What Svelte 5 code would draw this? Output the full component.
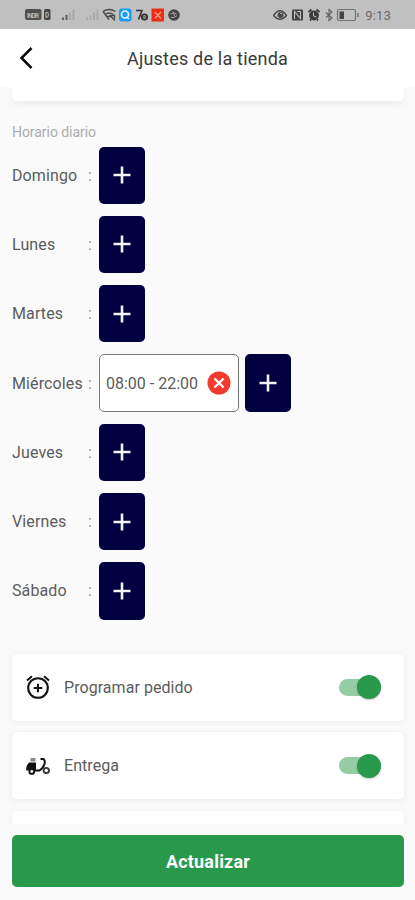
<script lang="ts">
  type Day = { name: string; slots: string[] };

  let days: Day[] = $state([
    { name: 'Domingo', slots: [] },
    { name: 'Lunes', slots: [] },
    { name: 'Martes', slots: [] },
    { name: 'Miércoles', slots: ['08:00 - 22:00'] },
    { name: 'Jueves', slots: [] },
    { name: 'Viernes', slots: [] },
    { name: 'Sábado', slots: [] }
  ]);

  let options = $state([
    { label: 'Programar pedido', icon: 'alarm', enabled: true },
    { label: 'Entrega', icon: 'scooter', enabled: true }
  ]);

  function addSlot(day: Day) {
    day.slots.push('08:00 - 22:00');
  }

  function removeSlot(day: Day, index: number) {
    day.slots.splice(index, 1);
  }
</script>

<div class="screen">
  <div class="status-bar">
    <svg width="158" height="16" viewBox="0 0 158 16">
      <rect x="0" y="2" width="16.5" height="11" rx="2" fill="#505050" />
      <text x="2" y="10.5" font-size="7" font-weight="700" fill="#b8b8b8" textLength="12">INDR</text>
      <rect x="19" y="2" width="6.5" height="11" rx="1.5" fill="#484848" />
      <path d="M21 5v5.5M21 5q2.5 0 2.5 2.7t-2.5 2.8" fill="none" stroke="#bbb" />
      <path d="M38 10.5V13M41.500 8v5" stroke="#606060" stroke-width="2" />
      <path d="M45 5.5V13M48.5 2.5V13" stroke="#a8a8a8" stroke-width="2" />
      <path d="M62 10.5V13M65.5 8v5M69 5.5V13M72.5 2.5V13" stroke="#a9a9a9" stroke-width="2" />
      <g fill="none" stroke="#494949" stroke-width="1.4">
        <path d="M78 4.5q6-4 12.5 0M80 7.5q4-3 8.5 0M82 10q2-1.5 4 0" />
        <path d="M84.5 8.5h5v3M90 13.5l-5-5M78 4.5l6 8" />
      </g>
      <rect x="94" y="1.5" width="12.5" height="13" rx="3" fill="#189cf5" />
      <circle cx="100" cy="7.5" r="3.5" fill="none" stroke="#e5f5ff" stroke-width="1.7" />
      <path d="M101.5 10l2.5 2" stroke="#e5f5ff" stroke-width="1.6" />
      <path d="M111 3.5h6l-3.5 9" fill="none" stroke="#333" stroke-width="1.6" />
      <circle cx="119.5" cy="10" r="2.7" fill="none" stroke="#333" stroke-width="1.8" />
      <path d="M117.5 10h4" stroke="#333" />
      <rect x="126.5" y="1.5" width="12.5" height="13" fill="#ee2c16" />
      <path d="M129.5 5l3.3 3 3.3-3M129.5 11.5l3.3-3 3.3 3" fill="none" stroke="#ff9b83" stroke-width="1.3" />
      <circle cx="149" cy="8" r="5.8" fill="#454545" />
      <path d="M145.500 7q3-2.500 6 0M146 10.500h3l3-2M148 4.500l1.500 4.500" fill="none" stroke="#a5a5a5" />
    </svg>
    <div class="status-right">
      <svg width="87" height="16" viewBox="0 0 87 16">
        <path d="M.5 8.5Q7-1 13.5 8.5 7 16 .5 8.5z" fill="none" stroke="#484848" stroke-width="1.4" />
        <circle cx="7.5" cy="8" r="3" fill="#484848" />
        <path d="M7 6l2 1" stroke="#bbb" />
        <rect x="19" y="2.5" width="11" height="11" rx="1" fill="#424242" />
        <path d="M21.5 12V4.5l6 7V4M24 4.5h3" fill="none" stroke="#bebebe" stroke-width="1.1" />
        <circle cx="41" cy="8.5" r="4.9" fill="#3c3c3c" />
        <path d="M35.5 5l3-2.5M46.5 5l-3-2.5M37 13.5l1-1M45 13.5l-1-1" stroke="#3c3c3c" stroke-width="1.8" />
        <path d="M40.5 5.5v3.5l3 1" fill="none" stroke="#bcbcbc" />
        <path d="M53 5.5l6 5.5-3 2.5v-11l3 2.5-6 5.5" fill="none" stroke="#606060" stroke-width="1.1" />
        <rect x="64.5" y="2.5" width="18" height="11" rx="1.5" fill="none" stroke="#747474" stroke-width="1.2" />
        <rect x="66.5" y="4.5" width="4.5" height="7.5" fill="#444" />
        <path d="M85 6v4" stroke="#747474" stroke-width="1.5" />
      </svg>
      <span class="clock">9:13</span>
    </div>
  </div>

  <header class="header">
    <button class="back" aria-label="Atrás">
      <svg width="14" height="24" viewBox="0 0 14 24">
        <path d="M12.5 2L2.5 12l10 10" fill="none" stroke="#0a0a0a" stroke-width="2.5" />
      </svg>
    </button>
    <h1>Ajustes de la tienda</h1>
  </header>

  <main class="content">
    <div class="card card-top"></div>

    <h2>Horario diario</h2>
    <div class="days">
      {#each days as day}
        <div class="day">
          <span class="day-name">{day.name}</span>
          <span class="colon">:</span>
          <div class="slots">
            {#each day.slots as slot, i}
              <div class="slot">
                <span>{slot}</span>
                <button class="remove" aria-label="Eliminar" onclick={() => removeSlot(day, i)}>
                  <svg width="24" height="24" viewBox="0 0 24 24">
                    <circle cx="12" cy="12" r="11.5" fill="#f23a2e" />
                    <path d="M7.5 7.5l9 9M16.5 7.5l-9 9" stroke="#fff" stroke-width="2.4" />
                  </svg>
                </button>
              </div>
            {/each}
            <button class="add" aria-label="Agregar" onclick={() => addSlot(day)}>
              <svg width="18" height="18" viewBox="0 0 18 18">
                <path d="M9 .5v17M.5 9h17" stroke="#f2f2f4" stroke-width="2.6" />
              </svg>
            </button>
          </div>
        </div>
      {/each}
    </div>

    <div class="options">
      {#each options as option}
        <div class="card option">
          {#if option.icon === 'alarm'}
            <svg width="26" height="26" viewBox="0 0 26 26" fill="none" stroke="#151515">
              <circle cx="13" cy="14" r="9.8" stroke-width="2.1" />
              <path d="M13 9.7v8.6M8.7 14h8.6" stroke-width="2" />
              <path d="M2 6.5l5-4.2M24 6.5l-5-4.2" stroke-width="2.1" />
            </svg>
          {:else}
            <svg width="26" height="26" viewBox="0 0 26 26">
              <rect x="5.5" y="5" width="5" height="3.5" fill="#8a8a8a" />
              <path d="M4 9.5h7v8H1.2q-.4-5 2.8-8z" fill="#111" />
              <path d="M10 17.5h4.5q3.500-2 5-6.500 1-3-1-5H15.500" fill="none" stroke="#111" stroke-width="2" />
              <circle cx="6.8" cy="18.5" r="2.4" fill="#fff" stroke="#111" stroke-width="1.9" />
              <circle cx="21.3" cy="17.5" r="2.7" fill="#fff" stroke="#333" stroke-width="1.8" />
            </svg>
          {/if}
          <span class="option-label">{option.label}</span>
          <button
            class="switch"
            class:on={option.enabled}
            role="switch"
            aria-checked={option.enabled}
            aria-label={option.label}
            onclick={() => (option.enabled = !option.enabled)}
          >
            <span class="thumb"></span>
          </button>
        </div>
      {/each}
      <div class="card option"></div>
    </div>
  </main>

  <footer class="footer">
    <button class="submit">Actualizar</button>
  </footer>
</div>

<style>
  :global(body) {
    background: #fafafa;
  }

  .screen {
    display: flex;
    flex-direction: column;
    height: 900px;
    overflow: hidden;
    background: #fafafa;
    font-family: Roboto, 'Liberation Sans', sans-serif;
    color: #5c5c5c;
  }

  button {
    padding: 0;
    border: none;
    background: none;
    font-family: inherit;
  }

  svg {
    display: block;
    flex: none;
  }

  .status-bar {
    display: flex;
    align-items: center;
    justify-content: space-between;
    flex: none;
    box-sizing: border-box;
    height: 29px;
    padding: 1px 24px 0 25px;
    background: #c0c0c0;
  }

  .status-right {
    display: flex;
    align-items: center;
    gap: 5px;
  }

  .clock {
    font-size: 13px;
    letter-spacing: 0.2px;
    color: #6a6a6a;
  }

  .header {
    display: grid;
    grid-template-columns: 40px 1fr 40px;
    align-items: center;
    flex: none;
    height: 58px;
    background: #fff;
  }

  .back {
    padding-left: 19px;
  }

  h1 {
    margin: 0;
    text-align: center;
    font-size: 18px;
    font-weight: 400;
    letter-spacing: 0.2px;
    color: #3a3a3a;
  }

  .content {
    flex: 1;
    min-height: 0;
    padding: 0 11px 0 12px;
    overflow: hidden;
  }

  .card {
    border-radius: 5px;
    background: #fff;
    box-shadow: 0 1px 7px rgba(0, 0, 0, 0.06);
  }

  .card-top {
    height: 13.5px;
    border-radius: 0 0 5px 5px;
    box-shadow: 0 3px 7px rgba(0, 0, 0, 0.06);
  }

  h2 {
    margin: 22px 0 5px;
    font-size: 14px;
    font-weight: 400;
    line-height: 19px;
    letter-spacing: -0.05px;
    color: #acacac;
  }

  .days {
    display: grid;
    gap: 12px;
  }

  .day {
    display: flex;
    align-items: center;
    height: 57.3px;
    font-size: 16px;
  }

  .day-name {
    width: 76px;
    letter-spacing: 0.12px;
  }

  .colon {
    width: 11px;
    color: #999;
  }

  .slots {
    display: flex;
    gap: 6px;
    height: 100%;
  }

  .slot {
    display: flex;
    align-items: center;
    justify-content: space-between;
    box-sizing: border-box;
    width: 140px;
    padding: 0 7.5px 0 6px;
    border: 1px solid #777;
    border-radius: 5px;
    background: #fff;
  }

  .add {
    display: grid;
    place-items: center;
    width: 46px;
    border-radius: 5px;
    background: #010041;
  }

  .options {
    display: grid;
    gap: 11.5px;
    margin-top: 34.4px;
  }

  .option {
    display: flex;
    align-items: center;
    box-sizing: border-box;
    height: 67px;
    padding: 0 23px 0 13px;
    font-size: 16px;
  }

  .option-label {
    flex: 1;
    margin-left: 13px;
    letter-spacing: 0.05px;
  }

  .switch {
    display: flex;
    align-items: center;
    width: 42px;
    height: 17px;
    border-radius: 9px;
    background: #bbb;
  }

  .switch.on {
    justify-content: flex-end;
    background: #94cca4;
  }

  .thumb {
    width: 24px;
    height: 24px;
    border-radius: 50%;
    background: #f1f1f1;
    box-shadow: 0 1px 2px rgba(0, 0, 0, 0.25);
  }

  .switch.on .thumb {
    background: #28994b;
  }

  .footer {
    flex: none;
    padding: 11px 11px 13px 12px;
  }

  .submit {
    display: block;
    width: 100%;
    height: 52px;
    border-radius: 5px;
    background: #28994b;
    color: #fff;
    font-size: 18px;
    font-weight: 700;
    letter-spacing: 0.2px;
  }
</style>
